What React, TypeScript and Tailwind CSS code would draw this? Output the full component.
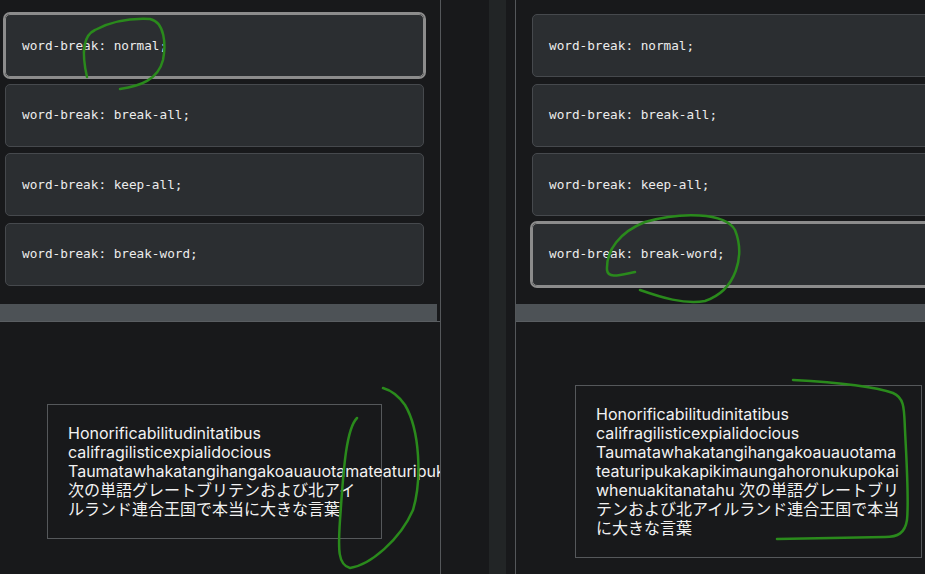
import React from 'react';

const options = ['normal', 'break-all', 'keep-all', 'break-word'];

const sample =
  'Honorificabilitudinitatibus califragilisticexpialidocious Taumatawhakatangihangakoauauotamateaturipukakapikimaungahoronukupokaiwhenuakitanatahu 次の単語グレートブリテンおよび北アイルランド連合王国で本当に大きな言葉';

function OptionList({ selected }: { selected: string }) {
  return (
    <div className="flex flex-col gap-[6.5px]">
      {options.map((o) => (
        <div
          key={o}
          className={
            o === selected
              ? 'h-[63px] w-[419px] shrink-0 flex items-center px-4 rounded-[5px] bg-[#2b2e31] border border-[#8c8c8c] outline-2 outline-[#8c8c8c]'
              : 'h-[63px] w-[419px] shrink-0 flex items-center px-4 rounded-[5px] bg-[#2b2e31] border border-[#46494d]'
          }
        >
          <span className="font-['DejaVu_Sans_Mono',monospace] text-[12.7px] text-[#ececec] whitespace-pre">
            word-break: {o};
          </span>
        </div>
      ))}
    </div>
  );
}

// horizontal strip under the options
function Bar({ trim }: { trim?: boolean }) {
  return (
    <div className="h-[18px] border-b border-[#5a5e62] flex">
      <div className={trim ? 'h-[17px] w-[437px] bg-[#4d5256]' : 'h-[17px] flex-1 bg-[#4d5256]'} />
    </div>
  );
}

export default function App() {
  return (
    <div className="relative w-[925px] h-[574px] bg-[#18191b] flex overflow-hidden font-['Inter','Noto_Sans_CJK_JP',sans-serif]">
      {/* left: word-break normal */}
      <div className="w-[441px] shrink-0 border-r border-[#54575a] flex flex-col overflow-hidden">
        <div className="h-[304px] pt-[14px] pl-[5px]">
          <OptionList selected="normal" />
        </div>
        <Bar trim />
        <div className="pl-[47px] pt-[82px]">
          <div className="w-[335px] border border-[#55585b] px-5 py-[19px] text-[16px] leading-[19px] text-[#f2f2f2] [word-break:normal]">
            {sample}
          </div>
        </div>
      </div>

      {/* gutter */}
      <div className="w-[74px] shrink-0 flex pl-[48px]">
        <div className="w-[17px] h-full bg-[#222526]" />
      </div>

      {/* right: word-break break-word */}
      <div className="flex-1 min-w-0 border-l border-[#54575a] flex flex-col overflow-hidden">
        <div className="h-[304px] pt-[14px] pl-[16px]">
          <OptionList selected="break-word" />
        </div>
        <Bar />
        <div className="pl-[59px] pt-[63px]">
          <div className="w-[347px] border border-[#55585b] pl-5 pr-[20px] py-[19px] text-[16px] leading-[19px] text-[#f2f2f2] [word-break:break-word]">
            {sample}
          </div>
        </div>
      </div>

      {/* hand-drawn annotations */}
      <svg className="absolute inset-0 pointer-events-none" width="925" height="574" fill="none">
        <g stroke="#2a8a1c" strokeWidth="2.5" strokeLinecap="round" strokeLinejoin="round">
          <path d="M87,77 C82,55 82,36 95,30 C110,22 130,18 150,19 C165,22 166,45 163,60 C158,80 140,86 120,89" />
          <path d="M635,272 C620,275 608,279 607,270 C606,250 620,232 645,222 C680,212 725,212 735,230 C745,255 737,290 705,301 C685,305 660,297 640,290" />
          <path d="M357,418 C345,430 343,480 340,520 C338,550 338,565 350,568 C370,565 400,540 413,510 C422,480 420,430 405,405 C398,395 390,390 383,388" />
          <path d="M793,380 C830,382 870,385 893,393 C905,398 904,410 905,430 C907,470 909,500 907,520 C905,533 898,537 885,537 L777,539" />
        </g>
      </svg>
    </div>
  );
}
